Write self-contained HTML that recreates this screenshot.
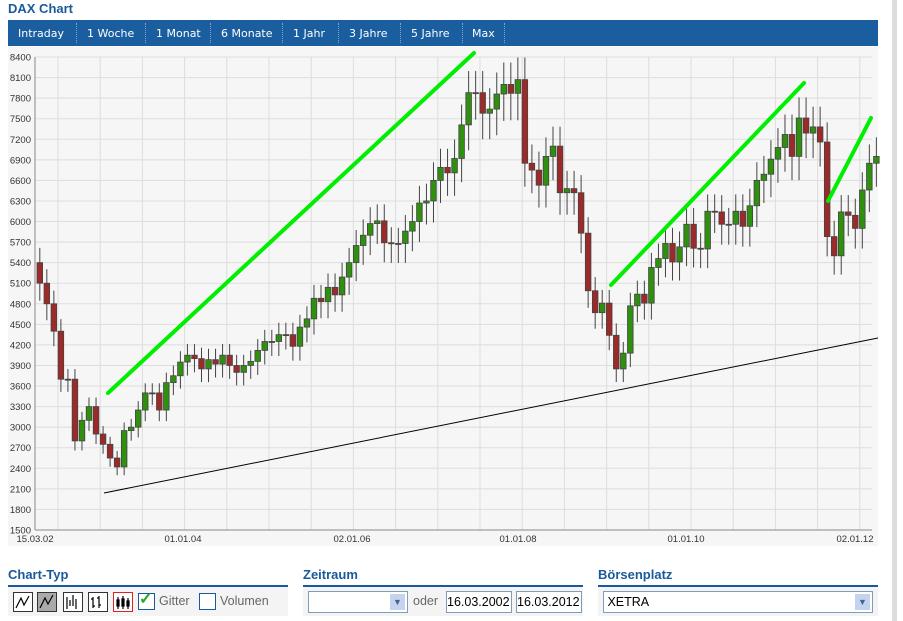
<!DOCTYPE html>
<html><head><meta charset="utf-8"><style>
body{margin:0;width:903px;height:621px;background:#fff;font-family:"Liberation Sans",sans-serif;position:relative;overflow:hidden}
.t{position:absolute;left:8px;top:1px;font-weight:bold;font-size:13px;color:#1a5a9c}
.nav{position:absolute;left:8px;top:20px;width:870px;height:26px;background:#1a5ea0;color:#fff;font-size:11px;font-family:"DejaVu Sans",sans-serif}
.nav span{position:absolute;top:7px}
.nav i{position:absolute;top:3px;height:20px;border-left:1px dotted #7fa6cf}
.sb{position:absolute;left:892px;top:0;width:5px;height:621px;background:#ddd}
.h{position:absolute;top:567px;font-weight:bold;font-size:13px;color:#1a5a9c}
.hl{position:absolute;top:585px;height:2px;background:#1a5a9c}
.pan{position:absolute;top:587px;height:29px;background:#f4f4f4}
.ib{position:absolute;top:592px;width:18px;height:18px;border:1px solid #333;background:#fff}
.in{position:absolute;top:591px;height:20px;border:1px solid #7f9db9;background:#fff;font-size:12.5px;line-height:20px;overflow:hidden;white-space:nowrap}
.dd{position:absolute;top:2px;right:2px;width:15px;height:16px;background:#c4d4f0;color:#4d6185;font-size:9px;text-align:center;line-height:16px}
.lb{position:absolute;top:594px;font-size:12.5px;color:#666}
</style></head><body>
<div class="t">DAX Chart</div>
<div class="nav">
<span style="left:10px">Intraday</span><i style="left:68px"></i>
<span style="left:79px">1 Woche</span><i style="left:137px"></i>
<span style="left:148px">1 Monat</span><i style="left:202px"></i>
<span style="left:213px">6 Monate</span><i style="left:274px"></i>
<span style="left:285px">1 Jahr</span><i style="left:330px"></i>
<span style="left:341px">3 Jahre</span><i style="left:392px"></i>
<span style="left:403px">5 Jahre</span><i style="left:454px"></i>
<span style="left:464px">Max</span><i style="left:496px"></i>
</div>
<div class="sb"></div>
<svg id="c" style="position:absolute;left:0;top:46px" width="903" height="500" font-family="Liberation Sans,sans-serif" font-size="9.5" fill="#333"></svg>
<div class="h" style="left:8px">Chart-Typ</div><div class="hl" style="left:8px;width:280px"></div>
<div class="h" style="left:303px">Zeitraum</div><div class="hl" style="left:303px;width:280px"></div>
<div class="h" style="left:598px">Börsenplatz</div><div class="hl" style="left:598px;width:280px"></div>
<div class="pan" style="left:8px;width:280px"></div>
<div class="pan" style="left:303px;width:280px"></div>
<div class="pan" style="left:598px;width:280px"></div>
<div class="ib" style="left:13px"></div><div class="ib" style="left:37px;background:#aaa"></div>
<div class="ib" style="left:63px"></div><div class="ib" style="left:88px"></div>
<div class="ib" style="left:113px;border-color:#d22"></div>
<svg style="position:absolute;left:13px;top:592px" width="120" height="20" stroke="#000" fill="none" stroke-width="1.2">
<path d="M3 16L8 6L11 13L16 4"/><path d="M27 16L32 6L35 12L40 3" /><path d="M54 5v12M57 8v6M60 3v11M63 7v10"/><path d="M80 5v11M78 7h2M80 14h2M86 4v12M84 6h2M86 13h2"/><path d="M105 5v12M110 4v13M115 6v11M104 8h2v6h-2zM109 7h2v7h-2zM114 9h2v5h-2z" fill="#000"/></svg>
<div class="ib" style="left:138px;width:15px;height:15px;border-color:#1a5a9c;top:593px"></div>
<div style="position:absolute;left:139px;top:589px;color:#2a2;font-size:16px;font-weight:bold">✓</div>
<div class="lb" style="left:159px">Gitter</div>
<div class="ib" style="left:199px;width:15px;height:15px;border-color:#1a5a9c;top:593px"></div>
<div class="lb" style="left:220px">Volumen</div>
<div class="in" style="left:308px;width:98px"><div class="dd">▼</div></div>
<div class="lb" style="left:413px">oder</div>
<div class="in" style="left:446px;width:64px">16.03.2002</div>
<div class="in" style="left:516px;width:64px">16.03.2012</div>
<div class="in" style="left:603px;width:268px">&nbsp;XETRA<div class="dd">▼</div></div>
<script>
var s=document.getElementById('c'),o='';
function Y(p){return 57+(8400-p)/6900*473-46}
o+='<rect x="8" y="1" width="870" height="499" fill="#f6f6f6"/>';
for(var p=1500;p<=8400;p+=300){var y=Y(p);o+='<line x1="35" x2="872" y1="'+y+'" y2="'+y+'" stroke="#ddd"/><text x="31" y="'+(y+3.5)+'" text-anchor="end">'+p+'</text>'}
for(var x=58;x<872;x+=42.2){o+='<line x1="'+x+'" x2="'+x+'" y1="'+Y(8400)+'" y2="'+Y(1500)+'" stroke="#ddd"/>'}
o+='<line x1="35" x2="35" y1="'+Y(8400)+'" y2="'+Y(1500)+'" stroke="#888"/><line x1="35" x2="872" y1="'+Y(1500)+'" y2="'+Y(1500)+'" stroke="#888"/>';
[['15.03.02',35],['01.01.04',183],['02.01.06',352],['01.01.08',518],['01.01.10',686],['02.01.12',855]].forEach(function(a){o+='<text x="'+a[1]+'" y="'+(Y(1500)+12)+'" text-anchor="middle">'+a[0]+'</text>'});
var c=[5400,5100,4800,4400,3700,3700,2800,3100,3300,2900,2750,2550,2420,2950,3000,3250,3500,3500,3250,3650,3750,3950,4050,4000,3850,3985,3920,4050,3900,3800,3900,3960,4120,4250,4250,4350,4350,4180,4460,4580,4880,4830,5040,4930,5190,5400,5650,5800,5970,6010,5690,5680,5680,5860,6000,6270,6300,6600,6790,6710,6920,7410,7880,7880,7580,7640,7860,8000,7870,8070,6850,6750,6530,6950,7100,6420,6480,6420,5830,4990,4670,4810,4340,3850,4080,4770,4940,4810,5330,5460,5680,5410,5630,5960,5610,5600,6150,6140,5960,5960,6150,5930,6230,6600,6690,6910,7080,7270,6950,7510,7290,7380,7160,5780,5500,6140,6090,5900,6460,6850,6950];
for(var i=1;i<c.length;i++){var op=c[i-1],cl=c[i],x=37+(i-1)*7.03,hi=Math.max(op,cl)*1.04,lo=Math.min(op,cl)*0.95;
var g=cl>op;o+='<line x1="'+(x+2.8)+'" x2="'+(x+2.8)+'" y1="'+Y(hi)+'" y2="'+Y(lo)+'" stroke="#444"/>';
var t=Y(Math.max(op,cl)),b=Y(Math.min(op,cl));o+='<rect x="'+x+'" y="'+t+'" width="5.6" height="'+Math.max(1,b-t)+'" fill="'+(g?'#2f8f0f':'#9b2a2a')+'" stroke="#444" stroke-width="0.8"/>'}
o+='<line x1="104" y1="447" x2="878" y2="292" stroke="#000"/>';
o+='<g stroke="#00ee00" stroke-width="4" stroke-linecap="round"><line x1="108" y1="347" x2="474" y2="7"/><line x1="611" y1="239" x2="804" y2="37"/><line x1="828" y1="155" x2="871" y2="72"/></g>';
s.innerHTML=o;
</script>
</body></html>
